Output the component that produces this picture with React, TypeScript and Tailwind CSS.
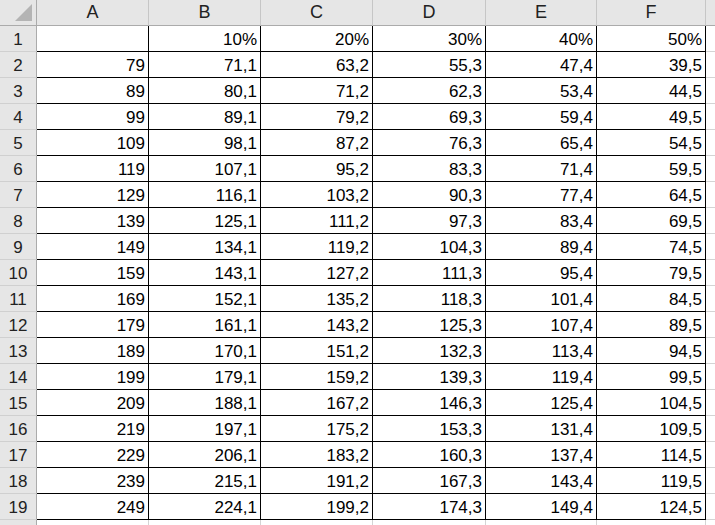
import React from 'react';

const COLS = ['A', 'B', 'C', 'D', 'E', 'F'];
const PCTS = [10, 20, 30, 40, 50];

// one row per price, with the price after each discount
const rows: string[][] = Array.from({ length: 18 }, (_, i) => {
  const price = 79 + i * 10;
  return [
    String(price),
    ...PCTS.map(p => ((price * (100 - p)) / 100).toFixed(1).replace('.', ',')),
  ];
});

const gridCols = 'grid grid-cols-[37px_112px_112px_112px_113px_111px_109px_1fr]';

const Corner: React.FC = () => (
  <div className="h-[26px] bg-[#e6e6e6] border-r border-b border-[#ababab] relative">
    <svg className="absolute left-0 top-0" width="36" height="25" viewBox="0 0 36 25">
      <polygon points="15,21 32,4 32,21" fill="#b4b4b4" />
    </svg>
  </div>
);

const RowHead: React.FC<{ n: number }> = ({ n }) => (
  <div className="h-[26px] bg-[#e6e6e6] border-r border-r-[#ababab] border-b border-b-[#d0d0d0] text-center text-[17px] text-[#222] leading-[21px] pt-[3px]">
    {n}
  </div>
);

const Cell: React.FC<{ value?: string }> = ({ value }) => (
  <div className="h-[26px] border-r border-b border-black text-right pr-[3px] text-[17px] text-black leading-[21px] pt-[3px]">
    {value}
  </div>
);

const Spare: React.FC = () => <div className="h-[26px] border-b border-[#d4d4d4]" />;

export default function App() {
  return (
    <div
      className="w-[715px] h-[525px] overflow-hidden bg-white"
      style={{ fontFamily: '"Liberation Sans", Arial, sans-serif' }}
    >
      {/* column headers */}
      <div className={gridCols}>
        <Corner />
        {COLS.map(c => (
          <div
            key={c}
            className="h-[26px] bg-[#e6e6e6] border-r border-r-[#c6c6c6] border-b border-b-[#ababab] text-center text-[18px] text-[#222] leading-[20px] pt-[2px]"
          >
            {c}
          </div>
        ))}
        <div className="h-[26px] bg-[#e6e6e6] border-b border-[#ababab]" />
      </div>

      {/* row 1: discount labels */}
      <div className={gridCols}>
        <RowHead n={1} />
        <Cell />
        {PCTS.map(p => (
          <Cell key={p} value={`${p}%`} />
        ))}
        <Spare />
      </div>

      {rows.map((r, i) => (
        <div key={i} className={gridCols}>
          <RowHead n={i + 2} />
          {r.map((v, j) => (
            <Cell key={j} value={v} />
          ))}
          <Spare />
        </div>
      ))}

      {/* partial row 20 */}
      <div className={gridCols}>
        <div className="h-[26px] bg-[#e6e6e6] border-r border-[#ababab]" />
        {COLS.map(c => (
          <div key={c} className="h-[26px] border-r border-[#d4d4d4]" />
        ))}
        <div className="h-[26px]" />
      </div>
    </div>
  );
}
